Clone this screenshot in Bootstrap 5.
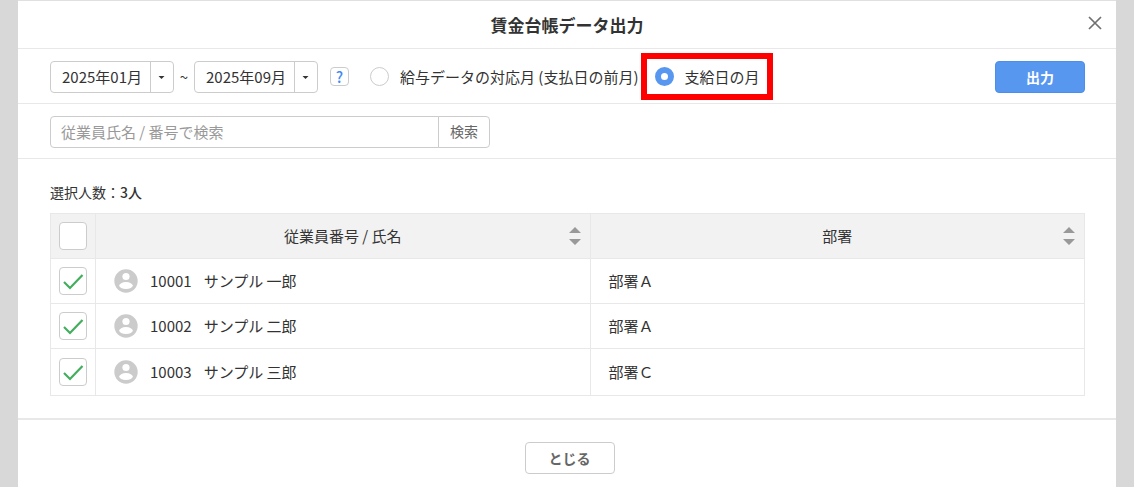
<!DOCTYPE html>
<html lang="ja">
<head>
<meta charset="utf-8">
<meta name="viewport" content="width=device-width, initial-scale=1">
<title>賃金台帳データ出力</title>
<link href="https://cdn.jsdelivr.net/npm/bootstrap@5.3.0/dist/css/bootstrap.min.css" rel="stylesheet">
<style>
  :root { --line: #e8e8e8; --edge: #cccccc; --ink: #333333; --blue: #5897f0; }
  body { background: #d8d8d8; color: var(--ink); font-family: "Noto Sans CJK JP", sans-serif; font-size: 15px; line-height: 24px; }
  .panel { margin: 0 18px; background: #fff; border-top: 1px solid #e0e0e0; }
  .panel-head { min-height: 48px; border-bottom: 1px solid var(--line); }
  .panel-title { font-size: 17px; line-height: 24px; font-weight: 700; }
  .close-btn { top: 12px; right: 11px; width: 20px; height: 20px; }
  .tool-row { min-height: 55px; padding: 1px 31px 0 32px; border-bottom: 1px solid var(--line); }
  .month-select {
    width: 124px; height: 32px; padding: 0 24px 0 11px; font-size: 15px; line-height: 24px; color: var(--ink);
    border: 1px solid var(--edge); border-radius: 4px;
    background-image: url("data:image/svg+xml,%3Csvg xmlns='http://www.w3.org/2000/svg' width='23' height='30'%3E%3Cpath d='M.5 0v30' stroke='%23cccccc'/%3E%3Cpath d='M8.500 14h6l-3 3z' fill='%23333333'/%3E%3C/svg%3E");
    background-size: 23px 30px; background-position: right 0 center;
  }
  .tilde { width: 20px; text-align: center; }
  .help-btn { width: 19px; height: 19px; margin-left: 12px; border: 1px solid var(--edge); border-radius: 4px; color: #3f8af5; font-size: 15px; line-height: 16px; font-weight: 500; }
  .choice { gap: 11px; }
  .choice .form-check-input { width: 19px; height: 19px; border: 1px solid var(--edge); }
  .choice .form-check-input:checked { border: 6px solid var(--blue); background: #fff; }
  .choice-first { margin-left: 21px; }
  .marked { min-height: 47px; margin-left: 2px; padding: 0 7px 0 8px; border: 6px solid #ff0000; }
  .output-btn { width: 90px; height: 32px; background: var(--blue); border: 1px solid #4c8eeb; border-radius: 4px; color: #fff; font-size: 14px; line-height: 20px; font-weight: 700; }
  .output-btn:hover { background: #4687e4; color: #fff; }
  .search-box { width: 440px; height: 32px; }
  .search-box .form-control { padding: 0 10px; font-size: 15px; line-height: 24px; border-color: var(--edge); border-radius: 4px; }
  .search-box .form-control::placeholder { color: #999; }
  .search-box .btn { width: 52px; padding: 0; border: 1px solid var(--edge); border-radius: 4px; color: #666; font-size: 14px; }
  .panel-main { padding: 21px 31px 22px 32px; }
  .picked { font-size: 14px; line-height: 24px; margin-bottom: 9px; }
  .picked strong { font-weight: 500; }
  .staff { margin: 0; color: var(--ink); border-color: var(--line); table-layout: fixed; }
  .staff > :not(caption) > * > * { height: 45px; padding: 0 18px; vertical-align: middle; color: var(--ink); }
  .staff > tbody > tr:last-child > td { height: 47px; }
  .staff thead th { background: #f2f2f2; font-weight: 400; text-align: center; position: relative; }
  .staff > :not(caption) > * > .tick-col { width: 45px; padding: 0; text-align: center; }
  .staff .form-check-input { display: block; width: 28px; height: 28px; margin: 0 auto; border: 1px solid var(--edge); border-radius: 4px; background-color: #fff; }
  .staff .form-check-input:checked { background-size: 26px 26px; background-image: url("data:image/svg+xml,%3Csvg xmlns='http://www.w3.org/2000/svg' viewBox='0 0 26 26'%3E%3Cpath d='M4 14l6 6L22.500 7' fill='none' stroke='%2343ae5d' stroke-width='2.200'/%3E%3C/svg%3E"); }
  .sorter { top: 13px; right: 9px; width: 12px; height: 18px; }
  .person { gap: 12px; }
  .panel-foot { min-height: 75px; padding: 22px 0 15px 5px; border-top: 2px solid var(--line); }
  .shut-btn { width: 90px; height: 32px; padding: 0; border: 1px solid var(--edge); border-radius: 4px; color: #666; font-size: 14px; line-height: 30px; font-weight: 700; }
</style>
</head>
<body>
<svg class="d-none" aria-hidden="true">
  <symbol id="avatar" viewBox="0 0 24 24">
    <circle cx="12" cy="12" r="11.700" fill="#cbcbcb"/>
    <circle cx="12" cy="7.500" r="3.600" fill="#fff"/>
    <ellipse cx="12" cy="16.600" rx="6.800" ry="3.500" fill="#fff"/>
  </symbol>
  <symbol id="sort" viewBox="0 0 12 18">
    <path d="M6 0l6 6H0zM6 18l6-6H0z" fill="#999"/>
  </symbol>
</svg>
<main class="panel min-vh-100">
  <header class="panel-head d-flex align-items-center justify-content-center position-relative">
    <h1 class="panel-title mb-0">賃金台帳データ出力</h1>
    <button type="button" class="close-btn btn p-0 border-0 d-flex align-items-center justify-content-center position-absolute" aria-label="閉じる">
      <svg width="14" height="14" viewBox="0 0 14 14"><path d="M1 1l12 12M13 1L1 13" stroke="#707070" stroke-width="1.700"/></svg>
    </button>
  </header>

  <div class="tool-row d-flex flex-wrap align-items-center">
    <select class="month-select form-select" aria-label="開始月"><option>2025年01月</option></select>
    <span class="tilde">~</span>
    <select class="month-select form-select" aria-label="終了月"><option>2025年09月</option></select>
    <button type="button" class="help-btn btn p-0">?</button>
    <div class="choice choice-first d-flex align-items-center">
      <input class="form-check-input m-0" type="radio" name="basis" id="basisData">
      <label for="basisData">給与データの対応月 (支払日の前月)</label>
    </div>
    <div class="choice marked d-flex align-items-center">
      <input class="form-check-input m-0" type="radio" name="basis" id="basisPay" checked>
      <label for="basisPay">支給日の月</label>
    </div>
    <button type="button" class="output-btn btn p-0 ms-auto">出力</button>
  </div>

  <form class="tool-row d-flex align-items-center">
    <div class="search-box input-group">
      <input type="text" class="form-control" placeholder="従業員氏名 / 番号で検索" aria-label="従業員氏名 / 番号で検索">
      <button type="button" class="btn">検索</button>
    </div>
  </form>

  <section class="panel-main">
    <p class="picked">選択人数：<strong>3人</strong></p>
    <table class="staff table table-bordered">
      <thead>
        <tr>
          <th class="tick-col"><input class="form-check-input" type="checkbox" aria-label="すべて選択"></th>
          <th>従業員番号 / 氏名<svg class="sorter position-absolute"><use href="#sort"/></svg></th>
          <th>部署<svg class="sorter position-absolute"><use href="#sort"/></svg></th>
        </tr>
      </thead>
      <tbody>
        <tr>
          <td class="tick-col"><input class="form-check-input" type="checkbox" aria-label="10001" checked></td>
          <td><div class="person d-flex align-items-center"><svg width="24" height="24"><use href="#avatar"/></svg><span>10001</span><span>サンプル 一郎</span></div></td>
          <td>部署Ａ</td>
        </tr>
        <tr>
          <td class="tick-col"><input class="form-check-input" type="checkbox" aria-label="10002" checked></td>
          <td><div class="person d-flex align-items-center"><svg width="24" height="24"><use href="#avatar"/></svg><span>10002</span><span>サンプル 二郎</span></div></td>
          <td>部署Ａ</td>
        </tr>
        <tr>
          <td class="tick-col"><input class="form-check-input" type="checkbox" aria-label="10003" checked></td>
          <td><div class="person d-flex align-items-center"><svg width="24" height="24"><use href="#avatar"/></svg><span>10003</span><span>サンプル 三郎</span></div></td>
          <td>部署Ｃ</td>
        </tr>
      </tbody>
    </table>
  </section>

  <footer class="panel-foot d-flex align-items-start justify-content-center">
    <button type="button" class="shut-btn btn">とじる</button>
  </footer>
</main>
<script src="https://cdn.jsdelivr.net/npm/bootstrap@5.3.0/dist/js/bootstrap.bundle.min.js"></script>
</body>
</html>
